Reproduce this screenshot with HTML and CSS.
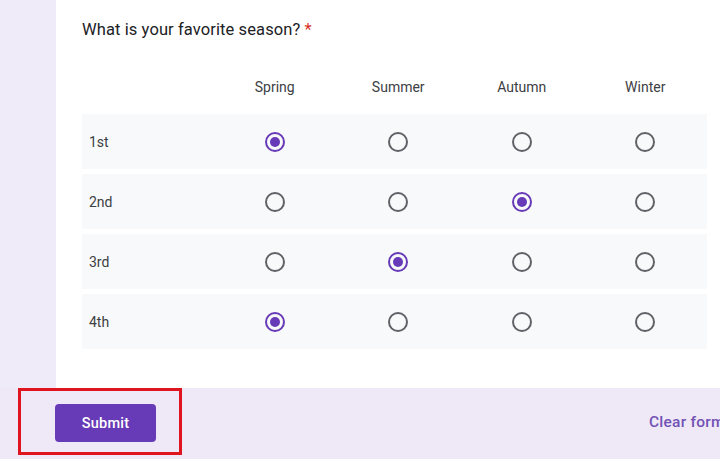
FILE: index.html
```html
<!DOCTYPE html>
<html>
<head>
<meta charset="utf-8">
<link rel="stylesheet" href="styles.css">
</head>
<body>
<div class="page">
  <div class="card">
    <div class="question">What is your favorite season? <span class="req">*</span></div>
    <div class="grid">
      <div class="head">
        <div class="label"></div>
        <div class="col">Spring</div>
        <div class="col">Summer</div>
        <div class="col">Autumn</div>
        <div class="col">Winter</div>
      </div>
      <div class="row">
        <div class="label">1st</div>
        <div class="col"><span class="radio on"></span></div>
        <div class="col"><span class="radio"></span></div>
        <div class="col"><span class="radio"></span></div>
        <div class="col"><span class="radio"></span></div>
      </div>
      <div class="row">
        <div class="label">2nd</div>
        <div class="col"><span class="radio"></span></div>
        <div class="col"><span class="radio"></span></div>
        <div class="col"><span class="radio on"></span></div>
        <div class="col"><span class="radio"></span></div>
      </div>
      <div class="row">
        <div class="label">3rd</div>
        <div class="col"><span class="radio"></span></div>
        <div class="col"><span class="radio on"></span></div>
        <div class="col"><span class="radio"></span></div>
        <div class="col"><span class="radio"></span></div>
      </div>
      <div class="row">
        <div class="label">4th</div>
        <div class="col"><span class="radio on"></span></div>
        <div class="col"><span class="radio"></span></div>
        <div class="col"><span class="radio"></span></div>
        <div class="col"><span class="radio"></span></div>
      </div>
    </div>
  </div>
  <div class="footer">
    <button class="submit">Submit</button>
    <span class="clear">Clear form</span>
    <div class="highlight"></div>
  </div>
</div>
</body>
</html>
```

FILE: styles.css
```css
html, body {
  margin: 0;
  padding: 0;
  background: #f0ebf8;
  overflow: hidden;
  width: 720px;
  height: 459px;
}
body {
  font-family: Roboto, "Liberation Sans", Arial, sans-serif;
  color: #202124;
}
.page {
  width: 720px;
  height: 459px;
  position: relative;
  overflow: hidden;
}
.card {
  margin-left: 56px;
  width: 700px;
  height: 388px;
  background: #ffffff;
  box-sizing: border-box;
  padding: 19px 0 0 26px;
}
.question {
  font-size: 16.5px;
  line-height: 22px;
  color: #202124;
  letter-spacing: 0.1px;
}
.req {
  color: #d93025;
}
.grid {
  margin-top: 35px;
  width: 625px;
  display: flex;
  flex-direction: column;
  gap: 5px;
}
.head, .row {
  display: grid;
  grid-template-columns: 131px repeat(4, 1fr);
  align-items: center;
}
.head {
  height: 22px;
  margin-bottom: 11px;
  font-size: 14px;
  color: #3c4043;
}
.row {
  height: 55px;
  background: #f8f9fa;
  font-size: 14px;
  color: #3c4043;
}
.row .label {
  padding-left: 7px;
}
.col {
  display: flex;
  justify-content: center;
  align-items: center;
  text-align: center;
}
.radio {
  width: 20px;
  height: 20px;
  border-radius: 50%;
  border: 2px solid #5f6368;
  box-sizing: border-box;
  display: flex;
  align-items: center;
  justify-content: center;
}
.radio.on {
  border-color: #673ab7;
}
.radio.on::after {
  content: "";
  width: 10px;
  height: 10px;
  border-radius: 50%;
  background: #673ab7;
}
.footer {
  height: 71px;
  display: flex;
  align-items: flex-start;
  padding: 16px 0 0 55px;
  box-sizing: border-box;
  position: relative;
  background: #efe9f7;
}
.submit {
  flex-shrink: 0;
  width: 101px;
  height: 38px;
  background: #673ab7;
  color: #ffffff;
  border: none;
  border-radius: 4px;
  font-family: Roboto, "Liberation Sans", Arial, sans-serif;
  font-size: 14.5px;
  font-weight: 500;
  letter-spacing: 0.25px;
  padding: 0;
}
.clear {
  flex-shrink: 0;
  margin-left: 493px;
  margin-top: 9px;
  white-space: nowrap;
  font-size: 15.5px;
  font-weight: 500;
  color: #7352b5;
  letter-spacing: 0.25px;
}
.highlight {
  position: absolute;
  left: 18px;
  top: 0;
  width: 164px;
  height: 67px;
  border: 3px solid #e0141e;
  box-sizing: border-box;
}
```
